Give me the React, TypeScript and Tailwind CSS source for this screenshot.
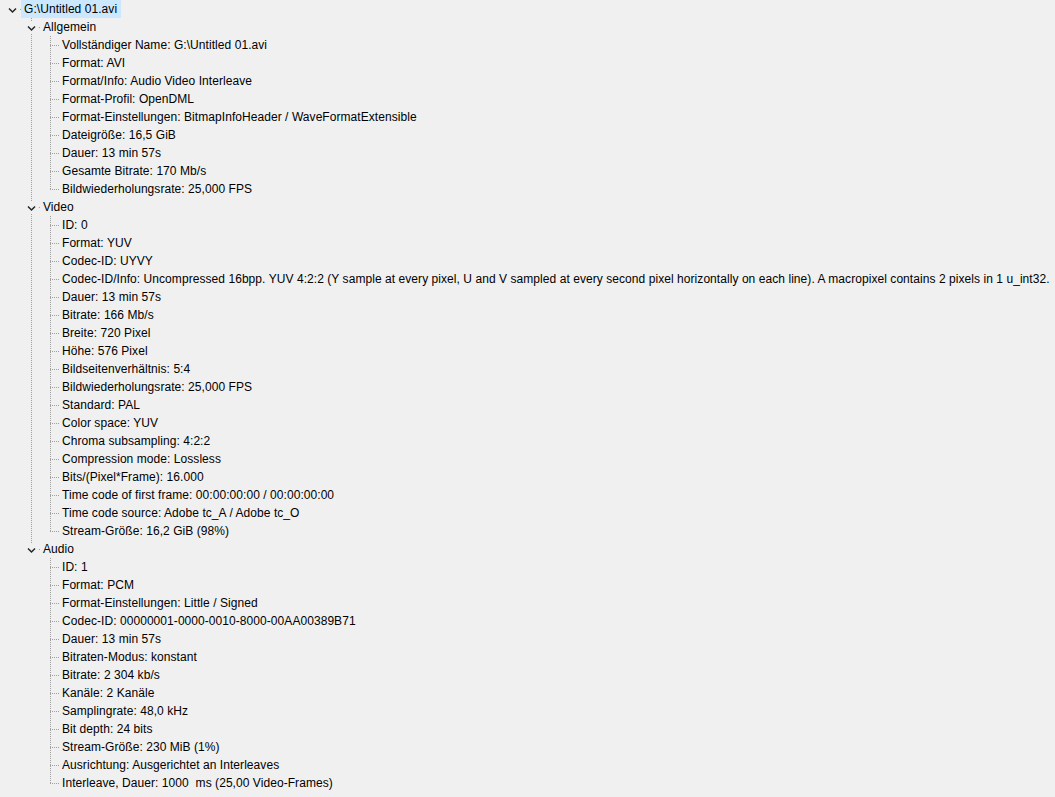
import React from "react";

type Node = { label: string; selected?: boolean; children?: Node[] };

const tree: Node = {
  label: "G:\\Untitled 01.avi",
  selected: true,
  children: [
    {
      label: "Allgemein",
      children: [
        "Vollständiger Name: G:\\Untitled 01.avi",
        "Format: AVI",
        "Format/Info: Audio Video Interleave",
        "Format-Profil: OpenDML",
        "Format-Einstellungen: BitmapInfoHeader / WaveFormatExtensible",
        "Dateigröße: 16,5 GiB",
        "Dauer: 13 min 57s",
        "Gesamte Bitrate: 170 Mb/s",
        "Bildwiederholungsrate: 25,000 FPS",
      ].map((label) => ({ label })),
    },
    {
      label: "Video",
      children: [
        "ID: 0",
        "Format: YUV",
        "Codec-ID: UYVY",
        "Codec-ID/Info: Uncompressed 16bpp. YUV 4:2:2 (Y sample at every pixel, U and V sampled at every second pixel horizontally on each line). A macropixel contains 2 pixels in 1 u_int32.",
        "Dauer: 13 min 57s",
        "Bitrate: 166 Mb/s",
        "Breite: 720 Pixel",
        "Höhe: 576 Pixel",
        "Bildseitenverhältnis: 5:4",
        "Bildwiederholungsrate: 25,000 FPS",
        "Standard: PAL",
        "Color space: YUV",
        "Chroma subsampling: 4:2:2",
        "Compression mode: Lossless",
        "Bits/(Pixel*Frame): 16.000",
        "Time code of first frame: 00:00:00:00 / 00:00:00:00",
        "Time code source: Adobe tc_A / Adobe tc_O",
        "Stream-Größe: 16,2 GiB (98%)",
      ].map((label) => ({ label })),
    },
    {
      label: "Audio",
      children: [
        "ID: 1",
        "Format: PCM",
        "Format-Einstellungen: Little / Signed",
        "Codec-ID: 00000001-0000-0010-8000-00AA00389B71",
        "Dauer: 13 min 57s",
        "Bitraten-Modus: konstant",
        "Bitrate: 2 304 kb/s",
        "Kanäle: 2 Kanäle",
        "Samplingrate: 48,0 kHz",
        "Bit depth: 24 bits",
        "Stream-Größe: 230 MiB (1%)",
        "Ausrichtung: Ausgerichtet an Interleaves",
        "Interleave, Dauer: 1000  ms (25,00 Video-Frames)",
      ].map((label) => ({ label })),
    },
  ],
};

const LINE = "#a0a0a0";

// one 19px column of the tree guides
function Guide({
  vertical,
  stub = false,
  expander = false,
}: {
  vertical: "none" | "full" | "top";
  stub?: boolean;
  expander?: boolean;
}) {
  return (
    <svg width={19} height={18} className="shrink-0 block" shapeRendering="crispEdges">
      {vertical !== "none" && (
        <line
          x1={9.5}
          y1={0}
          x2={9.5}
          y2={vertical === "full" ? 18 : 10}
          stroke={LINE}
          strokeWidth={1}
          strokeDasharray="1 1"
        />
      )}
      {stub && (
        <line x1={9} y1={9.5} x2={18} y2={9.5} stroke={LINE} strokeWidth={1} strokeDasharray="1 1" />
      )}
      {expander && (
        <>
          <rect x={3} y={3} width={13} height={13} fill="#f0f0f0" />
          <path
            d="M6 8.5 L9.5 12 L13 8.5"
            fill="none"
            stroke="#262626"
            strokeWidth={1.5}
            shapeRendering="geometricPrecision"
          />
        </>
      )}
    </svg>
  );
}

function Rows({ node, depth, last, trail }: { node: Node; depth: number; last: boolean; trail: boolean[] }) {
  const hasKids = !!node.children?.length;
  const own: "none" | "full" | "top" = depth === 0 ? "none" : last ? "top" : "full";

  return (
    <>
      <div className="flex h-[18px] items-center">
        {trail.map((cont, i) => (
          <Guide key={i} vertical={cont ? "full" : "none"} />
        ))}
        <Guide vertical={own} stub expander={hasKids} />
        <span
          className={
            "-ml-[1px] h-[18px] whitespace-pre pl-[3px] pr-[4px] leading-[18px] tracking-[0.06px] " +
            (node.selected ? "bg-[#cce8ff]" : "")
          }
        >
          {node.label}
        </span>
      </div>
      {node.children?.map((child, i) => (
        <Rows
          key={i}
          node={child}
          depth={depth + 1}
          last={i === node.children!.length - 1}
          trail={depth === 0 ? [...trail, false] : [...trail, !last]}
        />
      ))}
    </>
  );
}

export default function App() {
  return (
    <div
      className="min-h-screen w-full overflow-hidden bg-[#f0f0f0] pl-[3px] text-[12px] text-black"
      style={{ fontFamily: '"Liberation Sans", Arial, sans-serif' }}
    >
      <Rows node={tree} depth={0} last trail={[]} />
    </div>
  );
}
